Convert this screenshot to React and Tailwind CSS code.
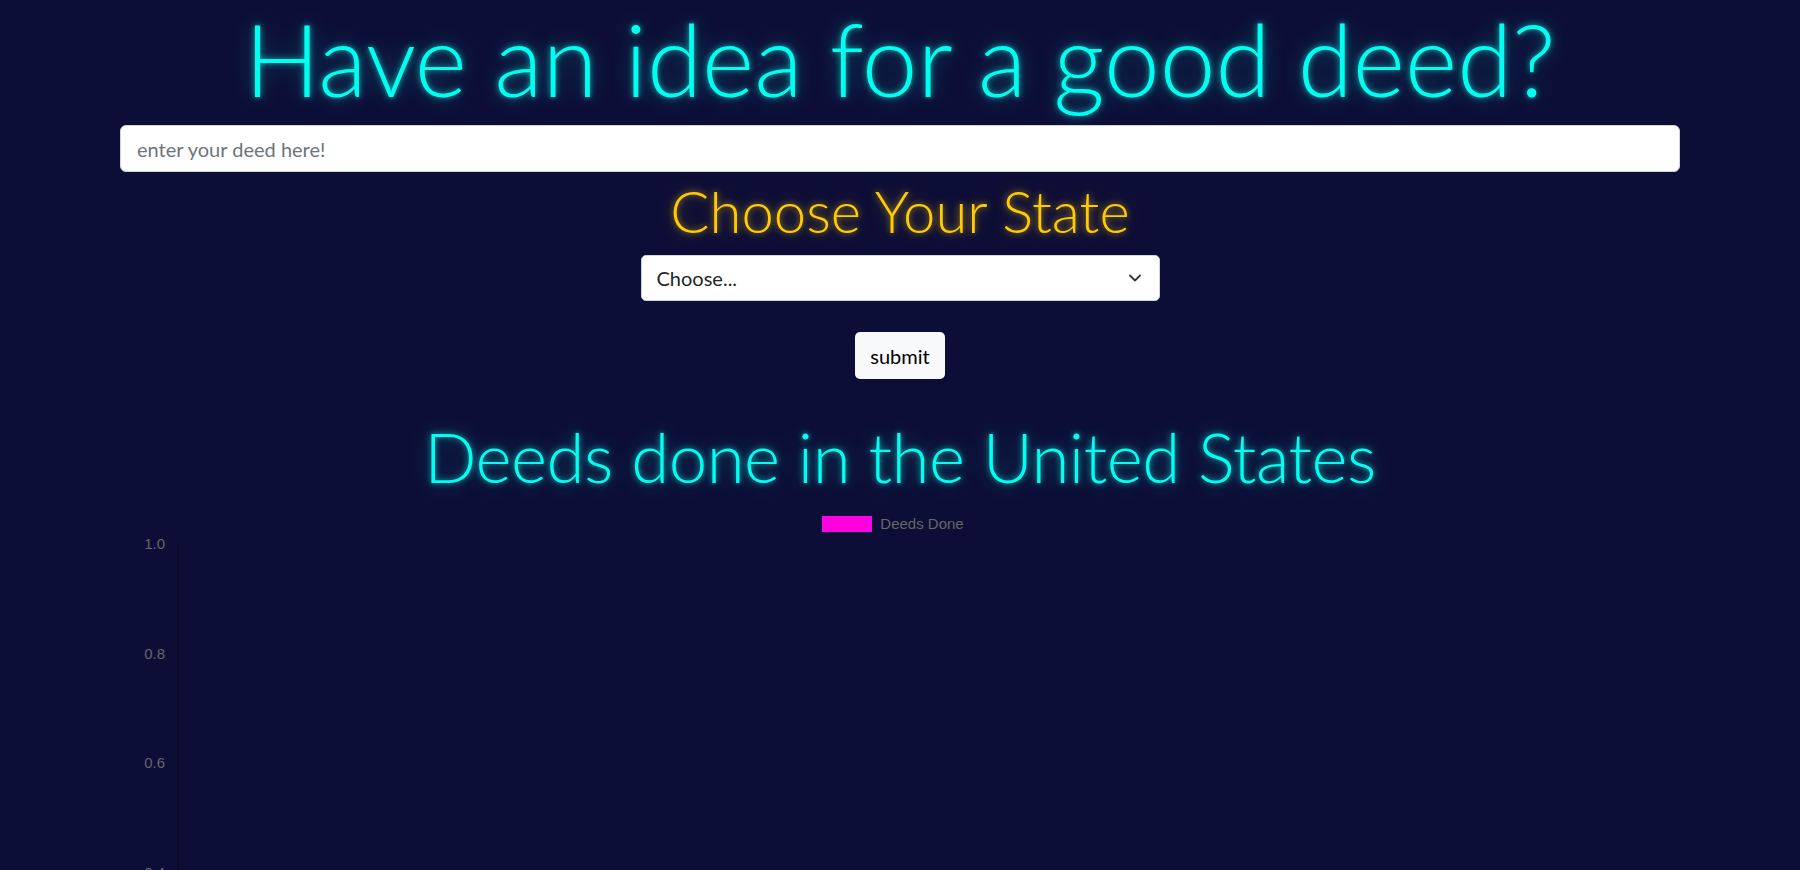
import { ChevronDown } from "lucide-react";

const ticks = ["1.0", "0.8", "0.6", "0.4"];

function DeedsChart() {
  return (
    <svg width="1560" height="338" className="block">
      {ticks.map((t, i) => {
        const y = 12 + i * 109.5;
        return (
          <g key={t}>
            <line x1="48" x2="1560" y1={y} y2={y} stroke="rgba(0,0,0,0.12)" strokeWidth="1" />
            <text x="45" y={y + 5} textAnchor="end" fill="#666" fontSize="15" fontFamily="'Liberation Sans', Arial, sans-serif">
              {t}
            </text>
          </g>
        );
      })}
      <line x1="58" x2="58" y1="12" y2="338" stroke="rgba(0,0,0,0.3)" strokeWidth="1" />
    </svg>
  );
}

export default function App() {
  return (
    <div className="min-h-screen bg-[#0d0e37] font-['Lato',sans-serif] overflow-hidden">
      <div className="w-[1560px] mx-auto flex flex-col items-center">
        <h1 className="mt-[8px] text-[100px] leading-none font-light text-[#00fff0] [text-shadow:0_0_6px_rgba(0,255,240,0.7),0_0_22px_rgba(0,255,240,0.35)] whitespace-nowrap">
          Have an idea for a good deed?
        </h1>

        <input
          type="text"
          placeholder="enter your deed here!"
          className="mt-[17px] w-full h-[47px] px-[16px] bg-white rounded-[6px] border border-[#ced4da] text-[20px] text-[#212529] placeholder:text-[#6c757d] outline-none"
        />

        <h2 className="mt-[10px] text-[58px] leading-none font-light text-[#ffcc00] [text-shadow:0_0_6px_rgba(255,204,0,0.6),0_0_18px_rgba(255,204,0,0.3)]">
          Choose Your State
        </h2>

        <div className="relative mt-[15px] w-[519px] h-[46px]">
          <select className="appearance-none w-full h-full pl-[15px] pr-[45px] bg-white rounded-[5px] border border-[#ced4da] text-[20px] text-[#212529] outline-none">
            <option>Choose...</option>
          </select>
          <ChevronDown className="absolute right-[15px] top-[13px] w-[20px] h-[20px] text-[#343a40] pointer-events-none" strokeWidth={2.2} />
        </div>

        <button className="mt-[31px] h-[47px] px-[15px] bg-[#f8f9fa] rounded-[5px] text-[20px] text-black">
          submit
        </button>

        <h2 className="mt-[43px] text-[69px] leading-none font-light tracking-[-0.5px] text-[#00fff0] [text-shadow:0_0_6px_rgba(0,255,240,0.7),0_0_22px_rgba(0,255,240,0.35)] whitespace-nowrap">
          Deeds done in the United States
        </h2>

        <div className="mt-[25px] h-[16px] flex items-center gap-[8px] pr-[14px] font-['Liberation_Sans',Arial,sans-serif] text-[15px] text-[#666]">
          <span className="w-[50px] h-[16px] bg-[#ff00dd] border border-[#ff00ff]" />
          <span>Deeds Done</span>
        </div>

        <DeedsChart />
      </div>
    </div>
  );
}
